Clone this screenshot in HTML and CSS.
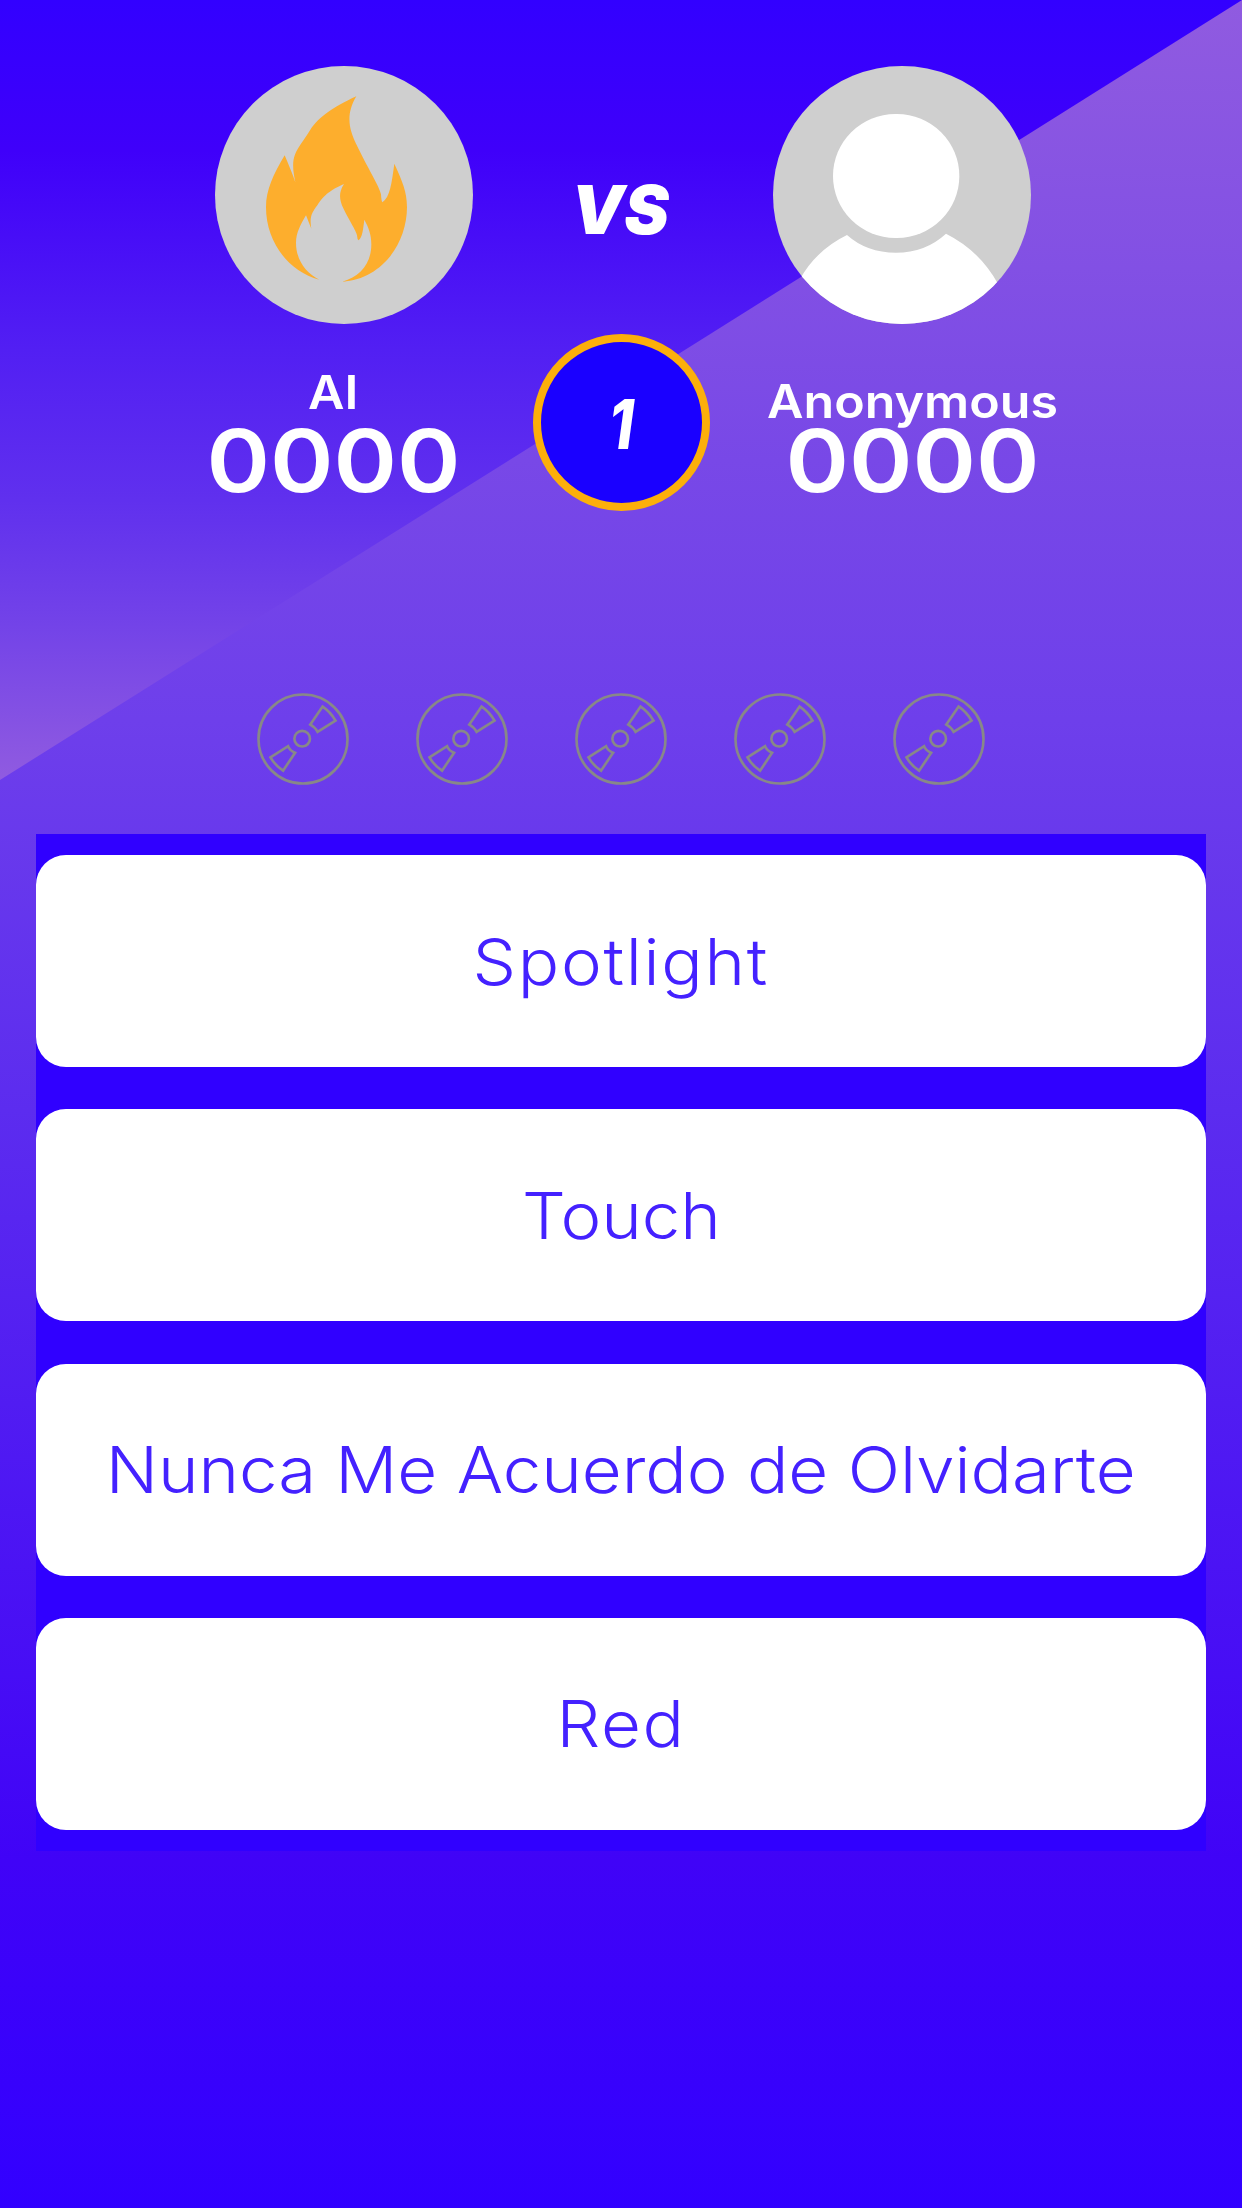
FILE: index.html
```html
<!DOCTYPE html>
<html lang="en">
<head>
<meta charset="utf-8">
<title>Music quiz duel</title>
<link rel="stylesheet" href="styles.css">
</head>
<body>
<svg class="defs" aria-hidden="true">
  <symbol id="disc" viewBox="51 38 276 277">
    <g fill="none" stroke="#888888" stroke-width="8">
      <circle cx="189" cy="176.500" r="134"/>
      <circle cx="186.500" cy="175.500" r="23.500"/>
      <path d="M248 79 Q270 93 287 121 L233 155 Q226 141 211 133 Z"/>
      <path d="M91 232 L144 198 Q149 211 165 218 L129 272 Q106 257 91 232 Z"/>
    </g>
  </symbol>
</svg>
<main class="game">
  <header class="versus">
    <section class="player player-left">
      <svg class="avatar" viewBox="45 48 774 774">
        <circle cx="432" cy="435" r="387" fill="#cfcfcf"/>
        <path fill="#fdae2d" d="M469 139 C395 173 358 201 331 239 C320 256 314 266 303 281 C276 319 275 343 286 397 C278 372 265 343 254 316 C220 373 198 420 198 472 C198 575 265 665 358 689 C316 669 288 628 288 578 C288 548 303 522 318 496 L334 536 C328 500 335 489 352 466 C366 446 377 426 432 402 C415 428 418 449 430 475 C444 506 470 545 471 556 Q472 568 475 571 C487 563 489 540 493 509 C506 533 514 554 514 583 C514 640 481 680 427 695 C542 689 621 583 621 471 C621 425 607 394 583 341 C575 400 570 441 547 457 Q544 453 543 433 C540 413 501 350 470 285 C447 237 436 195 469 139 Z"/>
      </svg>
      <div class="stats">
        <div class="name"><span class="name-text">AI</span></div>
        <div class="score"><span class="score-text">0000</span></div>
      </div>
    </section>
    <section class="middle">
      <div class="vs"><span class="vs-text">VS</span></div>
      <div class="round"><span class="round-text">1</span></div>
    </section>
    <section class="player player-right">
      <svg class="avatar" viewBox="69 48 774 774">
        <clipPath id="avatar-clip"><circle cx="456" cy="435" r="387"/></clipPath>
        <circle cx="456" cy="435" r="387" fill="#cfcfcf"/>
        <g clip-path="url(#avatar-clip)" fill="#fff">
          <rect x="249" y="192" width="379" height="372" rx="187"/>
          <path d="M150 687 Q200 599 291 555 Q350 608 438 608 Q526 608 588 551 Q690 602 746 705 L746 830 L150 830 Z"/>
        </g>
      </svg>
      <div class="stats">
        <div class="name"><span class="name-text">Anonymous</span></div>
        <div class="score"><span class="score-text">0000</span></div>
      </div>
    </section>
  </header>
  <div class="discs">
    <svg class="disc"><use href="#disc"/></svg>
    <svg class="disc"><use href="#disc"/></svg>
    <svg class="disc"><use href="#disc"/></svg>
    <svg class="disc"><use href="#disc"/></svg>
    <svg class="disc"><use href="#disc"/></svg>
  </div>
  <div class="answers">
    <button class="answer"><span class="answer-text loose">Spotlight</span></button>
    <button class="answer"><span class="answer-text">Touch</span></button>
    <button class="answer"><span class="answer-text">Nunca Me Acuerdo de Olvidarte</span></button>
    <button class="answer"><span class="answer-text loose">Red</span></button>
  </div>
</main>
</body>
</html>
```
FILE: styles.css
```css
* { box-sizing: border-box; }

body {
  margin: 0;
  font-family: Inter, "Open Sans", sans-serif;
  color: #fff;
}

.defs { display: none; }

.game {
  position: relative;
  isolation: isolate;
  width: 1242px;
  height: 2208px;
  overflow: hidden;
  background: linear-gradient(180deg, #905be0 0, #7848e7 460px, #6e3feb 720px, #5c2cef 1110px, #4003f7 1860px, #3200ff 2208px);
}

/* darker wedge across the top-left corner */
.game::before {
  content: "";
  position: absolute;
  z-index: -1;
  top: 0;
  left: 0;
  width: 1242px;
  height: 780px;
  clip-path: polygon(0 0, 100% 0, 0 100%);
  background: linear-gradient(180deg, #3200ff 0, #3f00fa 150px, #521ff3 350px, #6030ee 500px, #7343e8 625px, #905be0 780px);
}

.versus {
  display: grid;
  grid-template-columns: 533px 177px 532px;
  height: 693px;
  padding-top: 66px;
}

.avatar { display: block; width: 258px; height: 258px; }
.player-left .avatar { margin-left: 215px; }
.player-right .avatar { margin-left: 63px; }

.stats { text-align: center; white-space: nowrap; }
.player-left .stats { width: 245px; margin-left: 211px; }
.player-right .stats { width: 292px; margin-left: 56px; }

.name { height: 103px; font-size: 46px; font-weight: 600; line-height: 56px; }
.player-left .name { padding-top: 40px; }
.player-right .name { padding-top: 49px; }
.name-text { display: inline-block; transform: scaleX(1.09); }

.score { font-size: 86px; font-weight: 600; line-height: 68px; }
.score-text { display: inline-block; transform: scaleX(1.12); }

.middle { text-align: center; }
.vs {
  height: 268px;
  padding: 104px 3px 0 0;
  font-size: 67px;
  font-weight: 900;
  font-style: italic;
  line-height: 80px;
}
.vs-text { display: inline-block; }
.round {
  display: flex;
  align-items: center;
  justify-content: center;
  width: 177px;
  height: 177px;
  padding-top: 2px;
  border: 8.5px solid #fcaf0b;
  border-radius: 50%;
  background: #1a00ff;
  font-size: 69px;
  font-weight: 800;
  font-style: italic;
}
.round-text { transform: scaleX(0.82); }

.discs { display: flex; justify-content: center; gap: 67px; height: 141px; }
.disc { width: 92px; height: 92px; }

.answers {
  display: flex;
  flex-direction: column;
  gap: 42.25px;
  width: 1170px;
  height: 1017px;
  margin: 0 auto;
  padding: 21.125px 0;
  background: #3000ff;
}
.answer {
  flex: 1;
  border: 0;
  border-radius: 30px;
  background: #fff;
  color: #4421ff;
  font: 300 64px Inter, "Open Sans", sans-serif;
}
.answer-text { display: inline-block; transform: scaleX(1.076); }
.loose { letter-spacing: 1.6px; }
```
